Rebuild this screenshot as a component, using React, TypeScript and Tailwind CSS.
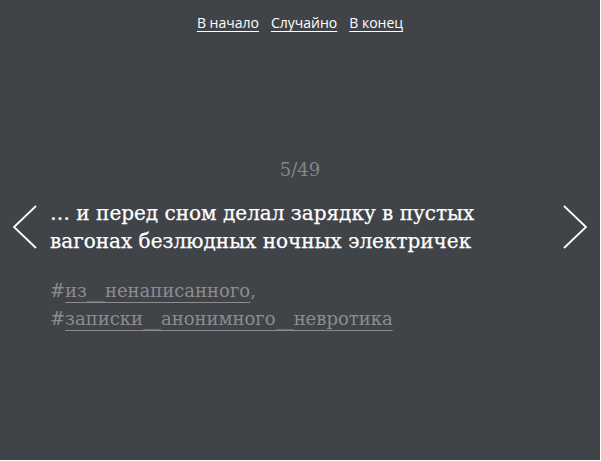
const tags = ["из__ненаписанного", "записки__анонимного__невротика"];

function Chevron({ dir }: { dir: "left" | "right" }) {
  return (
    <svg width="26" height="44" viewBox="0 0 26 44" fill="none" stroke="currentColor" strokeWidth="1.8">
      <path d={dir === "left" ? "M24 1 L2 22 L24 43" : "M2 1 L24 22 L2 43"} />
    </svg>
  );
}

export default function App() {
  return (
    <div className="w-[600px] h-[460px] bg-[#404348] flex flex-col">
      <nav className="flex justify-center gap-3 pt-[13px] font-['Open_Sans',sans-serif] text-[14px] leading-[20px] text-white">
        <a href="#" className="underline underline-offset-[3px]">В начало</a>
        <a href="#" className="underline underline-offset-[3px]">Случайно</a>
        <a href="#" className="underline underline-offset-[3px]">В конец</a>
      </nav>

      <div className="mt-[125px] text-center font-['DejaVu_Serif',serif] text-[18px] leading-[24px] text-[#85878a]">
        5/49
      </div>

      <div className="flex items-start mt-[17px] font-['DejaVu_Serif',serif]">
        <button className="w-[50px] flex justify-center pt-[6px] text-white">
          <Chevron dir="left" />
        </button>
        <div className="flex-1">
          <p className="max-w-[470px] text-[20px] leading-[28px] text-white [-webkit-text-stroke:0.25px_white]">
            … и перед сном делал зарядку в пустых вагонах безлюдных ночных электричек
          </p>
          <p className="mt-[22px] text-[18px] leading-[28px] text-[#8b8c8e]">
            {tags.map((t, i) => (
              <span key={t}>
                #<a href="#" className="underline underline-offset-[5px] decoration-[#8b8c8e]">{t}</a>
                {i < tags.length - 1 ? ", " : ""}
              </span>
            ))}
          </p>
        </div>
        <button className="w-[50px] flex justify-center pt-[6px] text-white">
          <Chevron dir="right" />
        </button>
      </div>
    </div>
  );
}
